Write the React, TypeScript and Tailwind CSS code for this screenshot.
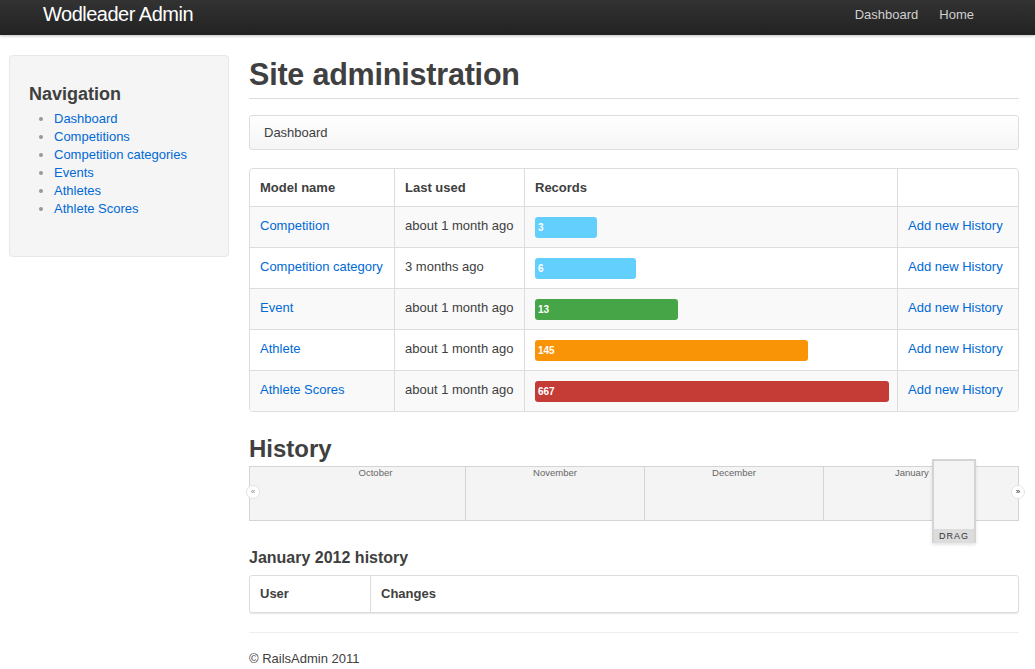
import React from "react";

const font = { fontFamily: '"Liberation Sans", Arial, sans-serif' };

const rows = [
  { name: "Competition", used: "about 1 month ago", count: "3", w: 62, color: "bg-[#62cffc]" },
  { name: "Competition category", used: "3 months ago", count: "6", w: 101, color: "bg-[#62cffc]" },
  { name: "Event", used: "about 1 month ago", count: "13", w: 143, color: "bg-[#46a546]" },
  { name: "Athlete", used: "about 1 month ago", count: "145", w: 273, color: "bg-[#f89406]" },
  { name: "Athlete Scores", used: "about 1 month ago", count: "667", w: 354, color: "bg-[#c43c35]" },
];

const nav = ["Dashboard", "Competitions", "Competition categories", "Events", "Athletes", "Athlete Scores"];

export default function App() {
  return (
    <div className="w-[1035px] h-[669px] overflow-hidden bg-white text-[#404040] text-[13px] leading-[18px]" style={font}>
      {/* Topbar */}
      <div className="h-[35px] bg-gradient-to-b from-[#333333] to-[#222222] shadow-[0_1px_3px_rgba(0,0,0,0.25)] flex items-start justify-between pl-[43px] pr-[61px]">
        <div className="text-white text-[20px] leading-[29px] tracking-[-0.5px]">Wodleader Admin</div>
        <div className="flex gap-[21px] text-[#d0d0d0] text-[13px] leading-[29px]">
          <span>Dashboard</span>
          <span>Home</span>
        </div>
      </div>

      <div className="flex pl-[9px] pt-[20px]">
        {/* Sidebar */}
        <div className="w-[220px] shrink-0">
          <div className="h-[202px] bg-[#f5f5f5] border border-[#e8e8e8] rounded-[4px] pl-[19px] pt-[26px]">
            <div className="text-[18px] font-bold leading-[24px] text-[#404040]">Navigation</div>
            <ul className="mt-[4px] pl-[25px] list-disc marker:text-[#999]">
              {nav.map((n) => (
                <li key={n} className="text-[#0069d6] leading-[18px]">{n}</li>
              ))}
            </ul>
          </div>
        </div>

        {/* Content */}
        <div className="ml-[20px] w-[770px]">
          <div className="border-b border-[#ddd] h-[45px] -mt-[1px]">
            <h1 className="text-[30.5px] font-bold leading-[40px] tracking-[-0.2px] text-[#404040]">Site administration</h1>
          </div>

          <div className="mt-[16px] h-[35px] bg-gradient-to-b from-white to-[#f5f5f5] border border-[#ddd] rounded-[3px] pl-[14px] flex items-center">
            Dashboard
          </div>

          {/* Model table */}
          <div className="mt-[18px] border border-[#ddd] rounded-[4px] overflow-hidden">
            <div className="flex h-[37px] font-bold items-center">
              <div className="w-[145px] pl-[10px] h-full flex items-center border-r border-[#ddd]">Model name</div>
              <div className="w-[130px] pl-[10px] h-full flex items-center border-r border-[#ddd]">Last used</div>
              <div className="w-[373px] pl-[10px] h-full flex items-center border-r border-[#ddd]">Records</div>
              <div className="flex-1" />
            </div>
            {rows.map((r, i) => (
              <div key={r.name} className={`flex h-[41px] border-t border-[#ddd] ${i % 2 === 0 ? "bg-[#f9f9f9]" : "bg-white"}`}>
                <div className="w-[145px] pl-[10px] pb-[2px] flex items-center border-r border-[#ddd] text-[#0069d6]">{r.name}</div>
                <div className="w-[130px] pl-[10px] pb-[2px] flex items-center border-r border-[#ddd]">{r.used}</div>
                <div className="w-[373px] pl-[10px] flex items-center border-r border-[#ddd]">
                  <div className={`${r.color} h-[21px] rounded-[3px] text-white text-[10px] font-bold flex items-center pl-[3px] pt-[1px]`} style={{ width: r.w }}>
                    {r.count}
                  </div>
                </div>
                <div className="flex-1 pl-[10px] pb-[2px] flex items-center text-[#0069d6]">Add new History</div>
              </div>
            ))}
          </div>

          <h2 className="mt-[22px] text-[24px] font-bold leading-[30px] text-[#404040]">History</h2>

          {/* Timeline */}
          <div className="relative mt-[2px] h-[55px] border border-[#d4d4d4] bg-[#f4f4f4] flex">
            {[
              { m: "October", w: 216 },
              { m: "November", w: 179 },
              { m: "December", w: 179 },
            ].map((c) => (
              <div key={c.m} className="border-r border-[#d4d4d4] flex justify-end" style={{ width: c.w }}>
                <div className="w-[179px] text-[9.5px] leading-[12px] text-[#666] text-center">{c.m}</div>
              </div>
            ))}
            <div className="flex-1 text-[9.5px] leading-[12px] text-[#666] pl-[71px]">January</div>
            <div className="absolute left-[-4px] top-[18px] w-[14px] h-[14px] rounded-full bg-white border border-[#e4e4e4] text-[8px] leading-[12px] text-center text-[#888]">«</div>
            <div className="absolute right-[-7px] top-[18px] w-[14px] h-[14px] rounded-full bg-white border border-[#e4e4e4] text-[8px] leading-[12px] text-center text-[#222]">»</div>
            <div className="absolute left-[682px] top-[-8px] w-[44px] h-[84px] border-2 border-[#d4d4d4] border-b-0 flex flex-col shadow-[0_2px_3px_rgba(0,0,0,0.1)]">
              <div className="flex-1 bg-[#f4f4f4]" />
              <div className="h-[14px] bg-[#dcdcdc] text-[9px] leading-[14px] tracking-[1px] text-[#333] text-center">DRAG</div>
            </div>
          </div>

          <h3 className="mt-[27px] text-[16px] font-bold leading-[20px] text-[#404040]">January 2012 history</h3>

          <div className="mt-[7px] h-[38px] border border-[#ddd] rounded-[3px] flex font-bold shadow-[0_1px_1px_rgba(0,0,0,0.1)]">
            <div className="w-[121px] pl-[10px] flex items-center border-r border-[#ddd]">User</div>
            <div className="flex-1 pl-[10px] flex items-center">Changes</div>
          </div>

          <div className="mt-[19px] border-t border-[#eee]" />
          <div className="mt-[17px] text-[13px]">© RailsAdmin 2011</div>
        </div>
      </div>
    </div>
  );
}
